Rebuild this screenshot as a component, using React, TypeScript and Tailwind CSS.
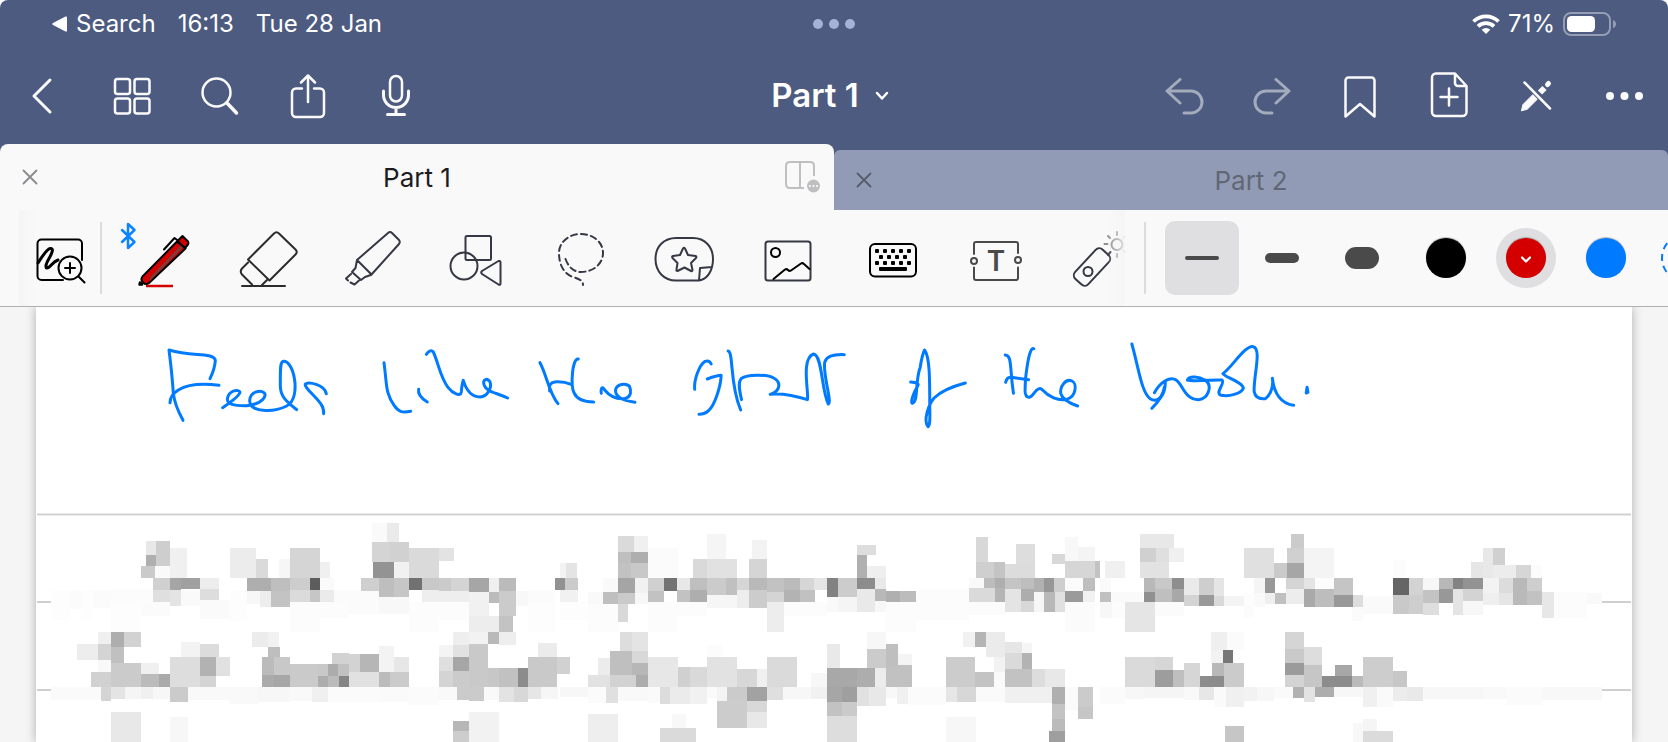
import type { ReactNode } from 'react';

// x1, y1, x2, y2, grey level
type Block = [number, number, number, number, number];

const blocksLeft: Block[] = [
  [61, 270, 115, 359, 253], [115, 270, 148, 326, 251], [148, 270, 183, 359, 253], [183, 270, 235, 323, 251], [235, 267, 357, 306, 252], [235, 306, 322, 395, 253],
  [322, 306, 407, 348, 251], [337, 123, 366, 165, 232], [366, 123, 407, 198, 206], [337, 165, 366, 198, 175], [322, 198, 363, 234, 202], [363, 198, 407, 234, 250],
  [407, 144, 456, 234, 240], [357, 234, 407, 270, 208], [407, 234, 438, 270, 165], [438, 234, 494, 267, 160], [494, 234, 549, 267, 237], [357, 270, 407, 306, 223],
  [407, 270, 438, 318, 228], [438, 270, 494, 318, 250], [494, 267, 549, 300, 221], [494, 300, 581, 357, 250], [581, 144, 656, 234, 236], [656, 177, 691, 234, 218],
  [723, 177, 755, 234, 246], [755, 144, 842, 234, 213], [842, 186, 871, 234, 240], [581, 270, 630, 362, 253], [630, 234, 700, 273, 174], [700, 234, 755, 273, 190],
  [755, 234, 813, 270, 205], [813, 234, 842, 270, 93], [842, 234, 883, 270, 250], [630, 273, 668, 312, 247], [668, 273, 700, 321, 237], [700, 273, 755, 321, 195],
  [755, 270, 813, 306, 219], [813, 270, 842, 306, 198], [842, 270, 883, 306, 235], [755, 306, 842, 395, 252], [842, 306, 926, 353, 252], [883, 270, 1013, 306, 251],
  [926, 306, 1013, 342, 251], [993, 69, 1037, 126, 250], [1037, 69, 1071, 126, 234], [993, 126, 1045, 186, 212], [1045, 126, 1101, 186, 209], [996, 186, 1057, 234, 147],
  [1057, 186, 1101, 234, 241], [1101, 144, 1188, 234, 218], [1188, 144, 1231, 183, 227], [961, 234, 1013, 273, 207], [1013, 234, 1057, 291, 190], [1057, 234, 1101, 291, 198],
  [1101, 234, 1138, 270, 113], [1138, 234, 1188, 273, 200], [1188, 234, 1222, 273, 203], [1222, 234, 1275, 273, 212], [1275, 234, 1333, 276, 166], [1333, 234, 1362, 276, 239],
  [1362, 234, 1411, 273, 187], [1013, 291, 1101, 342, 248], [1101, 306, 1188, 395, 252], [1138, 270, 1188, 306, 238], [1188, 273, 1275, 306, 238], [1188, 306, 1275, 359, 252],
  [1275, 276, 1333, 348, 241], [1333, 276, 1362, 309, 187], [1362, 273, 1411, 348, 203], [1411, 273, 1446, 318, 248], [1275, 348, 1362, 395, 237], [1362, 348, 1402, 395, 195],
  [1228, 396, 1275, 435, 238], [1275, 396, 1330, 432, 242], [1330, 396, 1362, 432, 185], [1362, 396, 1411, 435, 238], [1446, 270, 1524, 306, 251], [1446, 306, 1524, 395, 253],
  [197, 396, 235, 432, 240], [235, 396, 273, 441, 174], [273, 396, 322, 441, 210], [136, 432, 197, 480, 237], [197, 432, 235, 480, 212], [235, 441, 273, 489, 192],
  [197, 480, 235, 516, 249], [177, 516, 235, 561, 209], [235, 489, 322, 561, 203], [322, 489, 375, 522, 240], [322, 522, 375, 561, 187], [375, 522, 407, 561, 170],
  [407, 471, 494, 561, 221], [438, 426, 494, 471, 243], [494, 432, 549, 471, 220], [494, 471, 540, 528, 178], [540, 471, 581, 528, 225], [494, 528, 540, 561, 212],
  [61, 561, 206, 601, 250], [206, 561, 235, 603, 212], [235, 561, 276, 597, 228], [276, 561, 322, 597, 245], [322, 561, 357, 597, 240], [357, 561, 407, 597, 247],
  [407, 561, 459, 606, 203], [459, 561, 581, 600, 249], [581, 561, 662, 612, 249], [662, 561, 755, 606, 247], [755, 561, 819, 603, 249], [819, 561, 865, 606, 240],
  [865, 561, 1013, 606, 251], [1013, 561, 1101, 606, 250], [1101, 561, 1188, 615, 251], [1188, 561, 1240, 600, 249],
  [645, 396, 691, 441, 236], [691, 396, 723, 441, 242], [691, 441, 726, 471, 190], [674, 471, 709, 525, 187], [709, 471, 755, 525, 200], [674, 525, 709, 561, 171],
  [709, 525, 755, 561, 167], [755, 492, 836, 561, 202], [836, 492, 865, 528, 200], [865, 492, 894, 528, 172], [894, 492, 926, 528, 193], [836, 528, 865, 561, 173],
  [865, 528, 897, 561, 187], [897, 528, 926, 561, 133], [877, 459, 926, 492, 210], [926, 462, 958, 516, 211], [958, 462, 1013, 516, 182], [1013, 438, 1057, 516, 243],
  [1057, 471, 1101, 516, 231], [926, 516, 1013, 561, 225], [1013, 516, 1045, 561, 187], [1045, 516, 1101, 561, 203], [1188, 435, 1228, 471, 244], [1228, 435, 1275, 471, 226],
  [1188, 471, 1228, 513, 223], [1228, 471, 1275, 513, 166], [1188, 513, 1228, 561, 212], [1228, 513, 1275, 561, 203], [1275, 432, 1330, 561, 201], [1330, 504, 1362, 561, 199],
  [1362, 504, 1417, 561, 193], [1417, 504, 1446, 561, 140], [1446, 471, 1530, 561, 201], [1475, 429, 1530, 471, 235], [1530, 471, 1568, 522, 209], [1240, 561, 1275, 600, 203],
  [1275, 561, 1318, 603, 203], [1318, 561, 1362, 600, 249], [1362, 561, 1405, 606, 227], [1405, 561, 1446, 606, 216], [1446, 561, 1484, 597, 230], [1484, 561, 1533, 597, 246],
  [235, 636, 322, 726, 232], [407, 651, 459, 726, 247], [1228, 663, 1275, 693, 183], [1228, 693, 1275, 726, 205], [1275, 636, 1362, 726, 242],
];

const blocksMiddle: Block[] = [
  [0, 189, 17, 234, 243], [17, 189, 49, 234, 228], [-14, 234, 15, 270, 145], [15, 234, 52, 270, 203], [0, 270, 52, 306, 241], [0, 306, 81, 359, 253],
  [168, 108, 215, 156, 218], [215, 108, 256, 156, 240], [168, 156, 206, 189, 191], [206, 156, 256, 189, 174], [168, 189, 206, 234, 194], [206, 189, 256, 234, 200],
  [168, 234, 218, 279, 165], [218, 234, 256, 279, 241], [125, 234, 168, 276, 250], [81, 276, 125, 312, 249], [125, 276, 168, 312, 191], [168, 279, 218, 312, 202],
  [218, 279, 256, 312, 247], [168, 312, 197, 366, 217], [81, 312, 168, 395, 252], [256, 144, 343, 234, 251], [256, 306, 340, 395, 252], [256, 234, 302, 273, 208],
  [302, 234, 340, 273, 115], [340, 234, 377, 270, 232], [377, 234, 427, 270, 191], [256, 273, 302, 306, 194], [340, 270, 377, 306, 194], [377, 270, 427, 306, 174],
  [386, 177, 427, 234, 217], [427, 177, 514, 234, 225], [427, 102, 482, 177, 245], [558, 120, 601, 177, 243], [549, 177, 601, 234, 213], [427, 234, 482, 285, 203],
  [482, 234, 514, 285, 192], [514, 234, 549, 270, 214], [549, 234, 601, 270, 185], [514, 270, 549, 323, 237], [549, 270, 601, 323, 204], [427, 285, 514, 323, 246],
  [601, 234, 650, 276, 194], [650, 234, 697, 270, 187], [697, 234, 738, 270, 214], [738, 234, 775, 270, 229], [601, 276, 650, 306, 212], [650, 270, 697, 306, 179],
  [697, 270, 740, 306, 193], [601, 306, 650, 395, 237], [650, 306, 775, 348, 252], [340, 306, 427, 348, 252], [775, 234, 807, 291, 130], [807, 234, 862, 291, 204],
  [862, 135, 918, 165, 221], [862, 165, 891, 234, 176], [891, 198, 947, 234, 239], [862, 234, 915, 267, 140], [915, 234, 947, 267, 233], [862, 267, 915, 336, 233],
  [915, 267, 947, 303, 184], [947, 273, 987, 306, 175], [987, 273, 1034, 306, 188], [775, 291, 807, 336, 249], [807, 291, 862, 336, 245], [915, 303, 947, 336, 247],
  [947, 306, 1034, 395, 252], [1034, 267, 1188, 359, 252], [1208, 111, 1243, 186, 216], [1208, 186, 1260, 234, 207], [1260, 186, 1292, 234, 196], [1292, 192, 1379, 234, 220],
  [1324, 132, 1379, 192, 221], [1429, 162, 1466, 192, 216], [1466, 111, 1504, 183, 248], [1504, 141, 1553, 183, 244], [1466, 183, 1553, 234, 214], [1553, 183, 1568, 234, 195],
  [1188, 234, 1231, 264, 249], [1231, 234, 1263, 264, 188], [1263, 234, 1292, 264, 174], [1292, 234, 1339, 267, 196], [1339, 234, 1376, 267, 190], [1376, 234, 1405, 276, 177],
  [1405, 234, 1434, 276, 151], [1434, 234, 1466, 276, 206], [1466, 234, 1519, 273, 251], [1519, 234, 1553, 273, 190], [1188, 264, 1263, 306, 218], [1263, 264, 1292, 306, 181],
  [1292, 267, 1339, 336, 228], [1339, 267, 1376, 303, 173], [1339, 303, 1376, 336, 216], [1376, 276, 1405, 336, 246], [1405, 276, 1437, 336, 184], [1437, 276, 1466, 336, 224],
  [1466, 273, 1519, 306, 154], [1519, 273, 1553, 306, 241], [1188, 306, 1292, 345, 251], [1466, 306, 1553, 395, 251],
  [174, 396, 209, 453, 221], [209, 396, 256, 453, 228], [145, 453, 209, 525, 191], [209, 453, 256, 489, 216], [209, 489, 256, 525, 183], [110, 474, 145, 525, 236],
  [81, 525, 145, 561, 226], [145, 525, 221, 561, 210], [221, 525, 256, 561, 173], [256, 471, 343, 561, 231], [343, 501, 377, 561, 208], [377, 501, 427, 561, 217],
  [427, 471, 514, 561, 226], [427, 435, 469, 471, 252], [514, 507, 572, 561, 215], [572, 507, 601, 561, 240], [601, 471, 688, 561, 218], [729, 519, 775, 561, 247],
  [0, 561, 81, 591, 247], [81, 561, 134, 609, 251], [134, 561, 168, 609, 224], [168, 561, 256, 603, 249], [256, 561, 290, 609, 250], [290, 561, 319, 612, 220],
  [319, 561, 377, 612, 235], [377, 561, 427, 612, 241], [427, 561, 456, 594, 250], [456, 561, 485, 603, 244], [485, 561, 543, 603, 203], [543, 561, 601, 603, 162],
  [456, 603, 543, 684, 204], [543, 603, 601, 636, 216], [543, 636, 601, 684, 232], [601, 561, 648, 600, 223], [648, 561, 729, 597, 247], [729, 561, 775, 597, 241],
  [775, 432, 813, 504, 233], [775, 504, 862, 561, 168], [862, 504, 915, 561, 173], [891, 396, 947, 447, 247], [891, 447, 947, 504, 203], [915, 504, 947, 561, 236],
  [947, 432, 981, 495, 191], [981, 462, 1022, 495, 244], [947, 495, 1022, 561, 193], [775, 561, 819, 606, 166], [819, 561, 862, 606, 159], [862, 561, 897, 618, 225],
  [897, 561, 947, 618, 232], [947, 561, 979, 594, 248], [979, 561, 1010, 612, 240], [1010, 561, 1121, 615, 251], [775, 606, 819, 648, 194], [819, 606, 862, 648, 202],
  [775, 648, 862, 726, 221], [1121, 471, 1205, 561, 204], [1170, 396, 1205, 441, 241], [1205, 396, 1237, 441, 180], [1237, 396, 1292, 471, 235], [1205, 516, 1260, 561, 195],
  [1260, 471, 1292, 516, 242], [1260, 516, 1292, 561, 250], [1292, 426, 1342, 459, 230], [1342, 429, 1371, 459, 245], [1292, 459, 1342, 507, 218], [1342, 459, 1371, 507, 179],
  [1292, 507, 1371, 561, 194], [1371, 507, 1408, 561, 221], [1408, 507, 1466, 561, 232], [1121, 561, 1153, 606, 230], [1153, 561, 1208, 606, 215], [1208, 561, 1292, 606, 250],
  [1292, 561, 1429, 609, 240], [1429, 561, 1466, 612, 175], [1429, 612, 1466, 657, 195], [1429, 657, 1466, 693, 187], [1420, 693, 1466, 726, 159], [1466, 561, 1504, 630, 250],
  [1504, 561, 1548, 621, 203], [1504, 621, 1548, 657, 198], [81, 642, 168, 726, 238], [325, 642, 366, 684, 248], [290, 684, 395, 726, 218], [1121, 651, 1208, 726, 247],
];

const blocksRight: Block[] = [
  [14, 183, 69, 234, 240], [0, 234, 30, 276, 250], [0, 276, 30, 306, 192], [30, 276, 120, 306, 250], [0, 306, 33, 353, 247], [33, 306, 69, 353, 252],
  [69, 306, 152, 396, 229], [110, 102, 204, 144, 232], [110, 144, 155, 186, 208], [155, 144, 190, 186, 223], [190, 144, 232, 186, 240], [110, 186, 190, 234, 226],
  [121, 234, 152, 276, 184], [152, 234, 199, 267, 200], [199, 234, 232, 267, 142], [121, 276, 152, 306, 144], [152, 267, 199, 306, 191], [199, 267, 232, 306, 168],
  [152, 306, 232, 348, 251], [232, 234, 273, 285, 234], [273, 234, 315, 285, 206], [315, 234, 342, 288, 229], [232, 285, 273, 318, 212], [273, 285, 315, 318, 153],
  [315, 288, 342, 318, 217], [342, 288, 398, 318, 244], [398, 144, 480, 234, 224], [527, 102, 563, 144, 203], [516, 144, 563, 189, 208], [480, 189, 516, 234, 202],
  [516, 189, 563, 234, 166], [563, 144, 646, 234, 244], [425, 234, 455, 279, 245], [455, 234, 483, 279, 152], [455, 279, 483, 312, 239], [483, 279, 513, 312, 192],
  [513, 234, 563, 267, 212], [513, 267, 563, 312, 237], [563, 234, 594, 267, 228], [594, 234, 646, 267, 252], [646, 234, 698, 285, 197], [563, 267, 594, 321, 169],
  [594, 267, 646, 321, 189], [646, 285, 698, 321, 152], [698, 285, 726, 321, 221], [398, 279, 425, 353, 252], [425, 279, 455, 321, 249], [696, 321, 726, 362, 251],
  [726, 288, 809, 342, 250], [809, 180, 845, 234, 252], [809, 234, 853, 285, 101], [853, 234, 892, 285, 211], [809, 285, 853, 342, 201], [853, 285, 892, 342, 206],
  [892, 234, 936, 270, 247], [892, 270, 936, 309, 195], [892, 309, 936, 345, 222], [936, 234, 974, 267, 184], [936, 267, 974, 309, 152], [974, 234, 1002, 267, 131],
  [1002, 234, 1057, 267, 147], [974, 267, 1002, 345, 228], [1002, 267, 1057, 303, 211], [1002, 303, 1057, 345, 247], [1024, 186, 1057, 234, 230], [1057, 144, 1085, 234, 232],
  [1085, 144, 1118, 195, 208], [1085, 195, 1148, 234, 236], [1148, 195, 1190, 234, 214], [1190, 195, 1219, 234, 252], [1057, 234, 1101, 279, 243], [1057, 279, 1101, 315, 239],
  [1101, 234, 1140, 279, 220], [1101, 279, 1140, 315, 229], [1140, 234, 1179, 315, 185], [1179, 234, 1220, 273, 206], [1179, 273, 1220, 315, 194], [1220, 276, 1253, 353, 231],
  [1253, 276, 1303, 353, 252], [1303, 276, 1344, 353, 252], [1344, 279, 1386, 312, 249],
  [306, 396, 351, 450, 239], [351, 396, 398, 450, 251], [306, 450, 340, 489, 242], [340, 450, 367, 489, 118], [309, 489, 342, 528, 184], [342, 489, 398, 561, 203],
  [276, 528, 342, 561, 140], [232, 489, 276, 561, 214], [69, 471, 152, 561, 218], [152, 471, 202, 510, 214], [152, 510, 202, 561, 157], [202, 510, 232, 561, 191],
  [511, 396, 563, 447, 213], [511, 447, 563, 489, 201], [511, 489, 563, 525, 155], [511, 525, 563, 561, 211], [563, 441, 613, 495, 221], [563, 495, 613, 561, 198],
  [613, 528, 696, 561, 140], [649, 495, 696, 528, 167], [696, 528, 726, 561, 186], [726, 471, 809, 561, 205], [809, 513, 847, 561, 199],
  [0, 561, 69, 612, 251], [69, 561, 121, 597, 247], [121, 561, 232, 594, 245], [232, 561, 273, 600, 249], [273, 561, 315, 600, 231], [315, 561, 348, 621, 250],
  [348, 561, 398, 621, 240], [398, 561, 433, 603, 242], [433, 561, 480, 603, 247], [480, 561, 533, 594, 250], [533, 561, 563, 594, 177], [563, 561, 594, 606, 227],
  [594, 561, 646, 591, 173], [646, 561, 726, 591, 247], [726, 561, 765, 621, 240], [765, 561, 809, 621, 250], [809, 561, 847, 603, 236], [847, 561, 892, 603, 233],
  [892, 561, 1057, 597, 247], [1057, 561, 1125, 597, 249], [1125, 561, 1220, 615, 251], [1220, 561, 1386, 600, 248], [345, 678, 398, 726, 198], [698, 669, 726, 726, 248],
  [726, 657, 765, 693, 245], [726, 693, 809, 726, 219],
];

const Blocks = ({ items, transform }: { items: Block[]; transform: string }) => (
  <g transform={transform} shapeRendering="crispEdges">
    {items.map(([x1, y1, x2, y2, g], i) => (
      <rect key={i} x={x1} y={y1} width={x2 - x1} height={y2 - y1} fill={`rgb(${g},${g},${g})`} />
    ))}
  </g>
);

const inkLeft = [
  'M99 271 Q74 225 70 190 Q66 130 57 60 C110 76 150 71 177 77 Q196 81 196 92 Q194 118 180 146',
  'M60 218 Q60 196 85 180 Q125 156 207 166',
  'M218 233 C255 208 270 195 270 186 C268 178 236 178 232 208 C232 222 250 228 290 227 C340 222 348 198 344 190 C336 178 300 183 299 212 C300 248 370 248 410 228 C434 216 438 180 434 150 C428 110 412 92 400 94 C390 96 391 120 391 165 C390 200 410 215 440 239',
  'M521 251 Q522 236 514 224 C500 200 462 174 466 162 C474 154 524 164 529 191',
  'M702 98 C708 140 708 170 714 188 C724 220 740 240 752 244 Q762 248 782 244',
  'M806 178 Q802 198 832 216',
  'M829 73 Q842 56 850 66 C866 100 870 140 894 172 C908 190 932 202 934 186 Q936 162 940 151 C948 178 962 200 990 201 C1014 200 1026 172 1020 155 C1010 142 998 150 1002 164 C1010 186 1034 186 1073 204',
  'M1170 98 C1190 134 1196 186 1224 221',
  'M1199 183 C1197 166 1200 158 1214 156 Q1240 154 1264 163',
  'M1285 87 C1266 84 1262 168 1272 188 Q1284 216 1331 216',
  'M1354 190 C1352 176 1356 166 1364 180 C1382 202 1404 208 1424 206 C1446 200 1444 180 1438 168 C1426 158 1402 162 1397 178 C1394 200 1416 210 1455 217',
];

const inkRight = [
  'M80 178 C78 150 90 106 104 94 Q114 90 118 102',
  'M109 147 Q132 136 141 136 C140 170 126 226 112 242 Q104 252 90 253',
  'M157 63 C170 66 160 162 186 240',
  'M188 209 C182 176 180 154 188 145 C200 134 246 132 262 144 C280 156 278 184 254 193 Q290 188 340 209 C344 190 324 86 354 72 C374 74 372 180 388 222 C398 220 374 128 380 96 Q386 72 425 74',
  'M578 156 Q600 158 594 168 C586 186 576 216 582 220 C596 216 588 150 600 112 Q604 76 610 60 C622 80 622 148 622 225 C622 250 624 286 618 290 C606 270 620 222 632 204 Q654 176 704 159',
  'M796 75 C812 76 806 112 815 190',
  'M797 157 Q800 140 810 142 L850 149',
  'M862 56 C850 46 842 148 842 172 C840 202 850 212 862 190 Q874 168 882 180 C896 200 918 214 938 208 C960 200 962 160 950 153 C934 144 922 172 924 190 Q928 212 963 228',
  'M1088 42 C1104 116 1110 186 1130 206 C1150 222 1166 192 1165 154 M1140 188 C1154 156 1176 138 1190 150 C1206 164 1210 210 1242 209 C1264 206 1276 166 1256 150 C1244 140 1220 136 1216 150 C1230 156 1280 148 1296 150 C1304 160 1280 186 1292 195 C1312 202 1340 190 1345 175 C1346 158 1300 140 1298 131 C1320 110 1348 46 1368 50 C1388 56 1368 140 1370 185 Q1374 210 1396 206 C1412 190 1414 160 1412 145 C1416 190 1432 220 1461 226',
  'M1134 235 Q1158 206 1163 172',
  'M1492 172 L1494 187 L1490 189 Z',
];

type NavItem = { label: string; viewBox: string; art: ReactNode; disabled?: boolean };

const navLeft: NavItem[] = [
  { label: 'Back', viewBox: '0 52 88 88', art: <path d="M50 80 34 96l16 16" strokeWidth="3" /> },
  {
    label: 'Thumbnails',
    viewBox: '88 52 88 88',
    art: (
      <>
        <rect x="115" y="79" width="15" height="15" rx="2.5" />
        <rect x="134.5" y="79" width="15" height="15" rx="2.5" />
        <rect x="115" y="98.5" width="15" height="15" rx="2.5" />
        <rect x="134.5" y="98.5" width="15" height="15" rx="2.5" />
      </>
    ),
  },
  { label: 'Find', viewBox: '176 52 88 88', art: <><circle cx="216.5" cy="92.5" r="14" /><path d="m227 103 9.500 10" strokeWidth="3.5" /></> },
  { label: 'Share', viewBox: '264 52 88 88', art: <path d="M302 88.5h-6a4 4 0 0 0-4 4v20.5a4 4 0 0 0 4 4h24a4 4 0 0 0 4-4V92.5a4 4 0 0 0-4-4h-6M308 102V76m-7 6.5 7-7 7 7" /> },
  { label: 'Record', viewBox: '352 52 88 88', art: <><rect x="390" y="76" width="12" height="25.5" rx="6" /><path d="M383.5 91v4a12.5 12.5 0 0 0 25 0v-4M396 108v6M387.5 114.5h17" strokeWidth="3" /></> },
];

const navRight: NavItem[] = [
  { label: 'Undo', viewBox: '1140 52 88 88', disabled: true, art: <path d="M1180 79.5 1167 91l13 12M1167.5 91h23.5a11 11 0 0 1 0 22h-7" strokeWidth="3" /> },
  { label: 'Redo', viewBox: '1229 52 88 88', disabled: true, art: <path d="m1277 79.5 13 11.5-13 12M1289.5 91H1267a11 11 0 0 0 0 22h6" strokeWidth="3" /> },
  { label: 'Bookmark', viewBox: '1316 52 88 88', art: <path d="M1345.5 116.5V80.5a3 3 0 0 1 3-3h23a3 3 0 0 1 3 3v36L1360 104z" /> },
  { label: 'Add page', viewBox: '1404 52 88 88', art: <path d="M1455 73.5h-19a4 4 0 0 0-4 4V112a4 4 0 0 0 4 4h26.5a4 4 0 0 0 4-4V86zM1455 74v9a3 3 0 0 0 3 3h8M1449 88.5v17M1440.5 97h17" /> },
  {
    label: 'Read-only mode',
    viewBox: '1492 52 88 88',
    art: (
      <>
        <path d="m1521.5 110.5 1.5-6 10-10 4.5 4.5-10 10z" fill="#fafafa" strokeWidth="1" />
        <path d="m1540 92.5 4.5-4.5" strokeWidth="6" strokeLinecap="butt" />
        <path d="m1547.5 84.5 1-1" strokeWidth="5" />
        <path d="m1526 83.5 22 22.500" stroke="#4d5b80" strokeWidth="5" strokeLinecap="butt" />
        <path d="m1524.5 82.5 25.5 26" />
      </>
    ),
  },
  {
    label: 'More',
    viewBox: '1580 52 88 88',
    art: <g fill="#fafafa" stroke="none"><circle cx="1610" cy="96" r="4" /><circle cx="1624.5" cy="96" r="4" /><circle cx="1639" cy="96" r="4" /></g>,
  },
];

const NavButton = ({ item }: { item: NavItem }) => (
  <button aria-label={item.label} disabled={item.disabled} className="h-22 w-22 shrink-0 disabled:opacity-50">
    <svg viewBox={item.viewBox} className="size-22" fill="none" stroke="#fafafa" strokeWidth="2.5" strokeLinecap="round" strokeLinejoin="round">
      {item.art}
    </svg>
  </button>
);

const keys = [[877, 251], [885, 251], [893, 251], [901, 251], [909, 251], [881, 257], [889, 257], [897, 257], [905, 257], [877, 263], [885, 263], [893, 263], [901, 263], [909, 263]];

const tools: { label: string; x: number; art: ReactNode }[] = [
  {
    label: 'Pen',
    x: 111,
    art: (
      <>
        <path d="m122 230 12.500 12-6.500 6V224l6.500 6L122 242" stroke="#0a84ff" />
        <path d="M146 286h27" stroke="#d40000" strokeLinecap="butt" />
        <path d="m164 249.500 10.500-11.500 4 3" stroke="#000" strokeWidth="2" />
        <path d="M177 241.500 142.500 276.500c-1.500 2-1.500 4 .5 6s4 2 6 .5L185.500 248.500z" fill="#d40000" stroke="#000" strokeWidth="2" />
        <path d="M183 247.500 150 281l-.5-3 31-32.500z" fill="#7d3b37" stroke="none" />
        <path d="m182.500 236 5.500 5.500q1 1.500 0 3l-3 3.500-7.500-7z" fill="#d40000" stroke="#000" strokeWidth="2" />
        <path d="m139.500 284.500.5-2 2 2z" stroke="#000" />
      </>
    ),
  },
  {
    label: 'Eraser',
    x: 215,
    art: <g stroke="#2c2c2e"><path d="m248 259.500 26-26q2.500-2.500 5 0l16.500 16q2.500 2.500 0 5l-26 26zM248 262.500l-6 6q-2.500 3 0 6l10 10M262 285l5-5" strokeWidth="2" /><path d="M242 286h43" strokeWidth="2" /></g>,
  },
  {
    label: 'Highlighter',
    x: 319,
    art: <path d="m357 260 31-27q2-2 4 0l7 7q1.500 2 0 4l-27.500 30.500zl-1.500 8-3.500 4 9 8 4-3 6.500-2.300M351 274l-5 4.500 2 2M350.500 282.500l4 2 4.500-4" strokeWidth="2" />,
  },
  {
    label: 'Shapes',
    x: 423,
    art: <g strokeWidth="2"><rect x="465.5" y="236" width="25.5" height="24" rx="1.5" /><circle cx="464" cy="266" r="13.5" /><path d="M482 271q-1.500 1.500 0 3l16.500 10.500q2 1 2-1v-21q0-2-2-1.500z" /></g>,
  },
  {
    label: 'Lasso',
    x: 527,
    art: <path d="M565.500 259c3 8 8 13 15.500 13 12 0 22-8 22-19s-10-19-22-19-22 8-22 19c0 12 5 21 14 24 7 2 10 4 10 8" strokeWidth="2" strokeDasharray="6 4" />,
  },
  {
    label: 'Stickers',
    x: 631,
    art: <g strokeWidth="2"><path d="M699 280.500h-23c-12 0-20.500-9-20.500-21.500s8.500-21 20.500-21h17c12 0 20 9 20 21 0 12-6 20.500-14 21.500l1-12.500 12-1" /><path d="M683 248.500q1-1.500 2 0l3 6.500 7.500 1q1.500.5.500 2l-5 5 1.500 7q0 1.500-1.500 1l-6.500-3.500-7 3.500q-1.500 0-1-1.500l1-6.500-5-5q-1-1.500.5-2l7-1z" /></g>,
  },
  {
    label: 'Image',
    x: 735,
    art: <g strokeWidth="2"><rect x="765.5" y="241.5" width="45" height="39" rx="2.5" /><circle cx="775.5" cy="252.5" r="4.5" stroke="#000" /><path d="m773.500 279 11.500-9.500q1.500-1 3 .5t3 .5l10-7q1.500-1 3 .5l5.500 5" stroke="#000" /></g>,
  },
  {
    label: 'Keyboard',
    x: 839,
    art: (
      <g fill="#000" stroke="none">
        <rect x="870" y="244" width="46" height="32.5" rx="5" fill="none" stroke="#000" strokeWidth="2" />
        {keys.map(([x, y]) => <rect key={`${x}-${y}`} x={x - 2} y={y - 2} width="4" height="4" rx="1" />)}
        <rect x="879" y="267" width="28" height="4" rx="1" />
      </g>
    ),
  },
  {
    label: 'Text',
    x: 943,
    art: (
      <g stroke="#4a4a4a" strokeWidth="2">
        <path d="M974 254v-10q0-2 2-2h40q2 0 2 2v9M974 267.500V278q0 2 2 2h40q2 0 2-2v-10.500" />
        <circle cx="974" cy="261" r="3" />
        <circle cx="1018" cy="260" r="3" />
        <text x="996" y="271" textAnchor="middle" fill="#4a4a4a" stroke="none" className="font-['Inter'] text-[28px] font-semibold">T</text>
      </g>
    ),
  },
  {
    label: 'Laser pointer',
    x: 1047,
    art: (
      <g strokeWidth="2">
        <rect x="1072" y="258" width="40" height="18" rx="5" transform="rotate(-47 1092 267)" />
        <circle cx="1088" cy="271.5" r="4.5" />
        <path d="m1108 255 2.500-3" />
        <g stroke="#8e8e93"><circle cx="1117" cy="244.500" r="5.500" /><path d="M1117 232v3M1117 254v3M1104.500 244h3M1108 236l2 2" /></g>
        <path d="m1123 238.500 1.500-2M1123 250l1.500 2" stroke="#d6d6d8" />
      </g>
    ),
  },
];

const strokes = ['h-1 rounded-full', 'h-[10px] rounded-[5px]', 'h-[22px] rounded-[11px]'];
const colours = [
  { name: 'Black', dot: 'bg-black' },
  { name: 'Red', dot: 'bg-[#d40000]' },
  { name: 'Blue', dot: 'bg-[#007aff]' },
];

const Cross = () => (
  <svg viewBox="0 0 16 16" className="size-4" fill="none" stroke="currentColor" strokeWidth="1.8" strokeLinecap="round">
    <path d="m1.500 1.500 13 13M14.500 1.500l-13 13" />
  </svg>
);

export default function App() {
  return (
    <div className="flex min-h-screen flex-col overflow-hidden bg-white font-['Inter',sans-serif]">
      <header className="rounded-t-lg bg-[#4d5b80] text-white">
        <div className="grid h-12 grid-cols-[1fr_auto_1fr] items-center px-[52px] text-[24px]">
          <div className="flex items-center gap-[22px]">
            <button className="flex items-center gap-[9px]">
              <svg viewBox="0 0 15 16" className="h-4 w-[15px]" fill="#fff"><path d="M13.500.5Q15 0 15 1.500v13q0 1.500-1.500 1L1 9Q-.5 8 1 7z" /></svg>
              Search
            </button>
            <span>16:13</span>
            <span>Tue 28 Jan</span>
          </div>
          <button aria-label="Multitasking" className="flex gap-[6px]">
            <span className="size-[10px] rounded-full bg-[#a5b1d8]" />
            <span className="size-[10px] rounded-full bg-[#a5b1d8]" />
            <span className="size-[10px] rounded-full bg-[#a5b1d8]" />
          </button>
          <div className="flex items-center justify-end gap-2">
            <svg viewBox="0 0 28 20" className="h-5 w-7" fill="none" stroke="#fff" strokeWidth="3.8">
              <path d="M1.500 7.500a18 18 0 0 1 25 0M6 12.300a11.500 11.500 0 0 1 16 0" />
              <path d="M14 20 9.700 15.800a6 6 0 0 1 8.600 0z" fill="#fff" stroke="none" />
            </svg>
            <span>71%</span>
            <svg viewBox="0 0 53 24" className="h-6 w-[53px]">
              <rect x="1" y="1" width="46" height="22" rx="7" fill="none" stroke="#949db3" strokeWidth="2" />
              <rect x="4" y="4" width="28" height="16" rx="4.5" fill="#fff" />
              <path d="M50 8q3 1 3 4t-3 4z" fill="#949db3" />
            </svg>
          </div>
        </div>

        <nav className="grid h-24 grid-cols-[1fr_auto_1fr] items-center">
          <div className="flex">{navLeft.map((item) => <NavButton key={item.label} item={item} />)}</div>
          <button className="-ml-2 flex items-center gap-4 text-[33px] font-semibold">
            Part 1
            <svg viewBox="0 0 14 10" className="h-[10px] w-[14px]" fill="none" stroke="#fff" strokeWidth="2.5" strokeLinecap="round" strokeLinejoin="round"><path d="m2 2 5 5.500L12 2" /></svg>
          </button>
          <div className="flex justify-end">{navRight.map((item) => <NavButton key={item.label} item={item} />)}</div>
        </nav>

        <div className="grid grid-cols-2 items-end text-[26px]">
          <div className="grid h-[66px] grid-cols-[1fr_auto_1fr] items-center rounded-t-lg bg-[#f9f9f9] px-[22px]">
            <button aria-label="Close Part 1" className="justify-self-start text-[#8a8a8e]"><Cross /></button>
            <button className="text-[#1c1c1e]">Part 1</button>
            <button aria-label="Split view" className="-mr-2 justify-self-end">
              <svg viewBox="0 0 35 32" className="h-8 w-[35px]" fill="none" stroke="#bfbfc1" strokeWidth="2">
                <path d="M29 15V5q0-4-4-4H5Q1 1 1 5v18q0 4 4 4h14M15 1v26" />
                <circle cx="28.5" cy="25" r="6.5" fill="#bfbfc1" stroke="none" />
                <g fill="#fff" stroke="none"><circle cx="25" cy="25" r="1" /><circle cx="28.5" cy="25" r="1" /><circle cx="32" cy="25" r="1" /></g>
              </svg>
            </button>
          </div>
          <div className="grid h-[60px] grid-cols-[1fr_auto_1fr] items-center rounded-t-md bg-[#929bb5] px-[22px] text-[#606775]">
            <button aria-label="Close Part 2" className="justify-self-start text-[#575c69]"><Cross /></button>
            <button>Part 2</button>
          </div>
        </div>
      </header>

      <div className="flex h-[97px] items-center overflow-hidden border-b border-[#b0b0b2] bg-[#f9f9f9]">
        <button aria-label="Zoom window" className="h-24 w-[100px] shrink-0 bg-linear-to-r from-transparent from-19% via-[#f5f5f5] via-19% to-[#f9f9f9] to-37%">
          <svg viewBox="0 210 100 96" className="h-24 w-[100px]" fill="none" stroke="#000" strokeWidth="2" strokeLinecap="round" strokeLinejoin="round">
            <path d="M63 280H41.500a4 4 0 0 1-4-4V243.500a4 4 0 0 1 4-4H78a4 4 0 0 1 4 4V260M78.500 276.500l6 6M65 268h10M70 263v10" />
            <circle cx="70" cy="268" r="11.5" />
            <path d="M38 263c5-8 9-14 12-14.500 4-.5 2.500 4-1 10-3 5-4 9-2 9.500 3 0 5-6 11-8" strokeWidth="3" />
          </svg>
        </button>
        <span className="mr-[9px] h-18 w-[2px] shrink-0 bg-[#dcdcde]" />
        <div className="relative -mr-[7px] flex shrink-0">
          {tools.map((tool) => (
            <button key={tool.label} aria-label={tool.label} className="h-24 w-26 shrink-0">
              <svg viewBox={`${tool.x} 210 104 96`} className="h-24 w-26" fill="none" stroke="#363845" strokeWidth="2.5" strokeLinecap="round" strokeLinejoin="round">
                {tool.art}
              </svg>
            </button>
          ))}
          <span className="pointer-events-none absolute right-[26px] top-0 h-full w-[18px] bg-linear-to-r from-[#f5f5f5]/0 to-[#f5f5f5]/80" />
        </div>
        <span className="mr-[19px] h-18 w-[2px] shrink-0 bg-[#dcdcde]" />
        <div className="mr-[17px] flex shrink-0 gap-[6px]">
          {strokes.map((size, i) => (
            <button key={size} aria-label={`Stroke width ${i + 1}`} aria-pressed={i === 0} className="flex size-[74px] items-center justify-center rounded-[10px] aria-pressed:bg-[#dfdfe1]">
              <span className={`w-[34px] bg-[#4a4a4a] ${size}`} />
            </button>
          ))}
        </div>
        <div className="flex shrink-0 gap-5">
          {colours.map(({ name, dot }) => (
            <button key={name} aria-label={name} aria-pressed={name === 'Red'} className="flex size-[60px] items-center justify-center rounded-full aria-pressed:bg-[#dfdfe1]">
              <span className={`flex size-10 items-center justify-center rounded-full shadow-[0_-1px_1px_rgba(0,0,0,0.25)] ${dot}`}>
                {name === 'Red' && (
                  <svg viewBox="0 0 12 8" className="mt-[3px] h-2 w-3" fill="none" stroke="#fff" strokeWidth="2.2" strokeLinecap="round" strokeLinejoin="round"><path d="m2 1.500 4 4 4-4" /></svg>
                )}
              </span>
            </button>
          ))}
          <button aria-label="Add colour" className="size-[60px]">
            <svg viewBox="0 0 60 60" fill="none" stroke="#007aff" strokeWidth="2"><circle cx="30" cy="30" r="24" strokeDasharray="7 5" /></svg>
          </button>
        </div>
      </div>

      <main className="grow overflow-hidden bg-[#f5f5f5] px-9">
        <div className="h-full bg-white shadow-[0_0_10px_rgba(0,0,0,0.3)]">
          <svg viewBox="36 307 1596 435" className="w-full" role="img" aria-label="Feels like the start of the book.">
            <g shapeRendering="crispEdges">
              <path d="M37 513h1594v3H37z" fill="#ebebeb" />
              <path d="M37 514h1594v1H37z" fill="#cdcdcd" />
              <path d="M37 601h14v2H37zM1602 601h29v2h-29zM37 689h14v2H37zM1602 689h29v2h-29z" fill="#cfcfcf" />
            </g>
            <Blocks items={blocksLeft} transform="translate(30 500) scale(0.3444 0.3333)" />
            <Blocks items={blocksMiddle} transform="translate(560 500) scale(0.3444 0.3333)" />
            <Blocks items={blocksRight} transform="translate(1100 500) scale(0.3622 0.3333)" />
            <g fill="none" stroke="#007aff" strokeWidth="3" strokeLinecap="round" strokeLinejoin="round">
              <g transform="translate(150 330) scale(0.3333)">
                {inkLeft.map((d) => <path key={d} d={d} vectorEffect="non-scaling-stroke" />)}
              </g>
              <g transform="translate(660 330) scale(0.4337 0.3333)">
                {inkRight.map((d) => <path key={d} d={d} vectorEffect="non-scaling-stroke" />)}
              </g>
            </g>
          </svg>
        </div>
      </main>
    </div>
  );
}
